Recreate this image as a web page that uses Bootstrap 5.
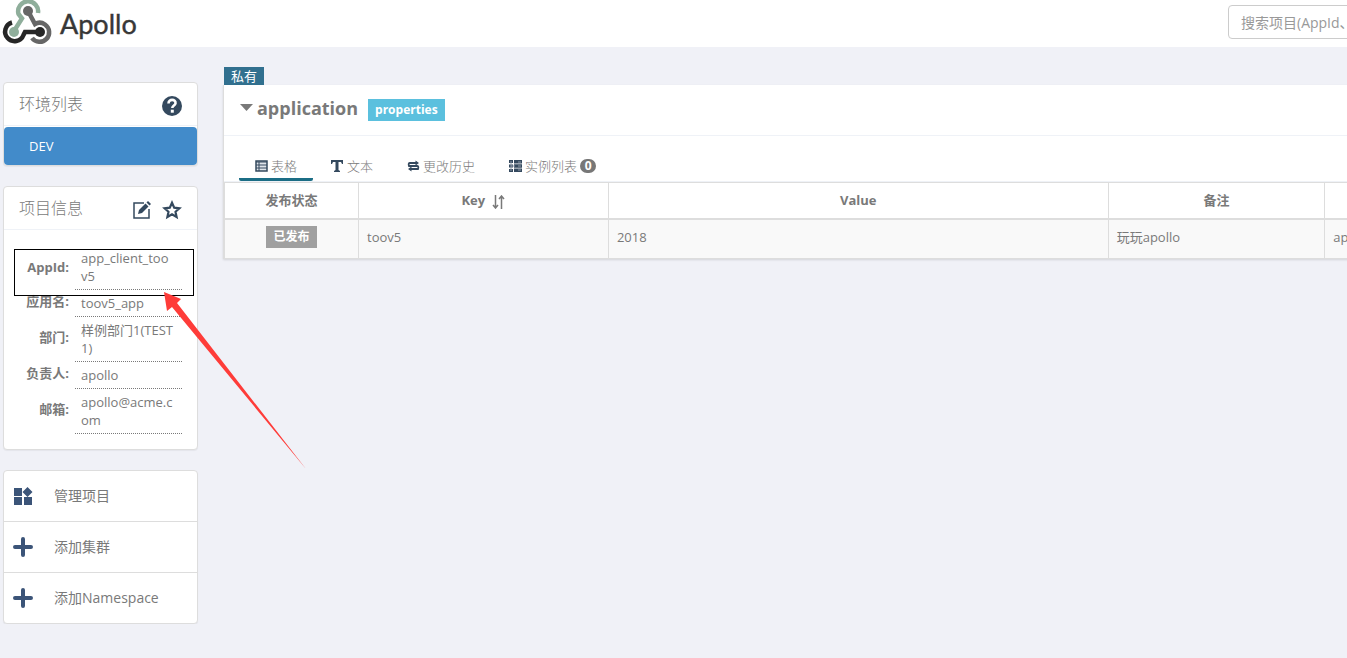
<!DOCTYPE html>
<html lang="zh-CN">
<head>
<meta charset="utf-8">
<meta name="viewport" content="width=device-width, initial-scale=1">
<title>Apollo</title>
<link href="https://cdn.jsdelivr.net/npm/bootstrap@5.3.0/dist/css/bootstrap.min.css" rel="stylesheet">
<style>
  body { font-family: "Open Sans", "Noto Sans CJK SC", sans-serif; font-size: 14px; line-height: 20px; color: #797979; background: #f0f1f7; overflow-x: hidden; }
  .topbar { height: 47px; padding-top: 5px; }
  .wide { min-width: 1668px; }
  .brand-name { font-family: Lato, sans-serif; font-size: 27px; line-height: 48px; color: #373737; -webkit-text-stroke: 0.4px #373737; }
  .search-box { width: 350px; height: 34px; font-size: 14px; color: #797979; border-color: #ccc; border-radius: 4px; }
  .search-box::placeholder { color: #999; }
  .search-wrap { margin-left: 1228px; }
  .side { width: 195px; margin-left: 3px; margin-top: 35px; gap: 20px; }
  .panel { background: #fff; border: 1px solid #ddd; border-radius: 4px; box-shadow: 0 1px 1px rgba(0,0,0,.05); }
  .panel-title { height: 43px; padding: 0 15px; gap: 10px; border-bottom: 1px solid #eff2f7; font-size: 16px; font-weight: 300; }
  .icon-btn { border: 0; padding: 4px 0 0; background: none; line-height: 0; }
  .env { height: 38px; margin-top: 1px; padding: 0 25px; background: #428bca; color: #fff; border-radius: 4px; font-size: 13px; line-height: 38px; }
  .info { padding: 19px 15px 15px 10px; font-size: 13px; line-height: 18px; }
  .info th { width: 61px; padding: 0 6px 4px 0; text-align: right; vertical-align: middle; font-weight: 700; }
  .info td { padding: 0 8px 4px 6px; border-bottom: 1px dotted #797979; word-break: break-all; }
  .info tr + tr td { padding-top: 4px; }
  .action { height: 51px; padding-left: 9px; gap: 20px; color: #797979; text-decoration: none; }
  .action:first-child { height: 50px; }
  .action + .action { border-top: 1px solid #ddd; }
  .mark-box { left: 10px; top: 62px; width: 180px; height: 47px; border: 1px solid #000; pointer-events: none; }
  .pointer-arrow { left: 159px; top: 105px; pointer-events: none; }
  .main-area { margin-left: 25px; margin-top: 20px; }
  .tag { width: 40px; height: 18px; margin-left: 1px; background: #31708f; color: #fff; font-size: 13px; line-height: 18px; }
  .ns { background: #fff; border-left: 1px solid #ddd; box-shadow: 0 1px 2px rgba(0,0,0,.12); }
  .ns-head { height: 51px; padding: 0 16px; border-bottom: 1px solid #eff2f7; }
  .ns-title { gap: 4px; padding-bottom: 5px; }
  .ns-name { font-size: 18px; line-height: 24px; font-weight: 700; }
  .type-label { height: 22px; margin-left: 10px; padding: 0 7px; background: #5bc0de; color: #fff; font-size: 12px; line-height: 22px; font-weight: 700; }
  .tabs { height: 46px; padding: 0 15px; gap: 2px; border-bottom: 1px solid #eff2f7; font-size: 13px; }
  .tab-link { height: 28px; padding: 0 16px; gap: 3px; color: #797979; text-decoration: none; font-weight: 300; border-bottom: 3px solid transparent; }
  .tab-link.active { border-bottom-color: #1b6d85; border-radius: 2px; }
  .count { width: 16px; height: 14px; line-height: 14px; border-radius: 7px; background: #777; color: #fff; font-size: 12px; font-weight: 700; text-align: center; }
  .grid-table { width: 1667px; table-layout: fixed; border-collapse: collapse; font-size: 13px; }
  .grid-table th, .grid-table td { border: 1px solid #ddd; padding: 0 8px; }
  .grid-table th { height: 36px; text-align: center; font-weight: 700; border-bottom: 2px solid #ddd; }
  .grid-table td { height: 40px; background: #f9f9f9; padding-bottom: 4px; }
  .col-state { width: 134px; }
  .col-key { width: 15%; }
  .col-value { width: 30%; }
  .col-note { width: 13%; }
  .state { height: 22px; padding: 0 7px; background: #a0a0a0; color: #fff; font-size: 12px; line-height: 22px; font-weight: 700; }
</style>
<script src="https://cdn.jsdelivr.net/npm/bootstrap@5.3.0/dist/js/bootstrap.bundle.min.js"></script>
</head>
<body>
<header class="topbar wide bg-white position-relative">
  <a href="#" class="position-absolute d-flex align-items-center text-decoration-none start-0 top-0">
    <svg width="56" height="48" viewBox="0 0 56 48" fill="none" stroke-width="4.500">
      <path d="M38 13A10 10 0 1 0 18.500 14L22 18.500L14 31" stroke="#8fae9b"/>
      <circle cx="14" cy="32" r="5" fill="#8fae9b"/>
      <path d="M12 22.500A9.500 9.500 0 1 0 23.500 35L25 32H39" stroke="#262626"/>
      <circle cx="40" cy="32" r="5" fill="#262626"/>
      <path d="M28 11L35 24Q40 21 45 24.500A9.500 9.500 0 1 1 32 38" stroke="#666"/>
      <circle cx="28" cy="11" r="5" fill="#666"/>
    </svg>
    <span class="brand-name ms-1">Apollo</span>
  </a>
  <div class="search-wrap"><input type="text" class="form-control search-box" aria-label="搜索项目" placeholder="搜索项目(AppId、项目名)"></div>
</header>

<div class="d-flex wide align-items-start">
  <aside class="side d-flex flex-column flex-shrink-0">
    <section class="panel">
      <div class="panel-title d-flex align-items-center justify-content-between">环境列表
        <button class="icon-btn" aria-label="帮助"><svg width="20" height="20" viewBox="0 0 20 20"><circle cx="10" cy="10" r="10" fill="#34495e"/><path d="M6.500 7.500C6.500 2.500 14 3 13.500 7.300C13.200 9.500 10.300 9.500 10.300 12" fill="none" stroke="#fff" stroke-width="2.600"/><path d="M8.800 13.700h3v3h-3z" fill="#fff"/></svg></button>
      </div>
      <div class="env">DEV</div>
    </section>

    <section class="panel position-relative">
      <div class="panel-title d-flex align-items-center">项目信息
        <button class="icon-btn ms-auto" aria-label="编辑"><svg width="20" height="20" viewBox="0 0 20 20" fill="none" stroke="#34495e"><path d="M12 3H2v15h15V9" stroke-width="1.500"/><path d="M6 14l1-4 6.500-6.500 3 3L10 13z" fill="#34495e" stroke="none"/><path d="M14.500 2.500L16 1l3 3-1.500 1.500z" fill="#34495e" stroke="none"/></svg></button>
        <button class="icon-btn" aria-label="收藏"><svg width="20" height="20" viewBox="0 0 20 20"><path d="M10 2.800l2.200 4.900 5.200.6-3.900 3.500 1.100 5.200-4.600-2.700L5.400 17l1.100-5.200-3.900-3.500 5.200-.6z" fill="none" stroke="#34495e" stroke-width="2.200"/></svg></button>
      </div>
      <div class="info">
        <table class="w-100">
          <tr><th>AppId:</th><td>app_client_toov5</td></tr>
          <tr><th>应用名:</th><td>toov5_app</td></tr>
          <tr><th>部门:</th><td>样例部门1(TEST1)</td></tr>
          <tr><th>负责人:</th><td>apollo</td></tr>
          <tr><th>邮箱:</th><td>apollo@acme.com</td></tr>
        </table>
      </div>
      <div class="mark-box position-absolute"></div>
      <svg class="pointer-arrow position-absolute" width="144" height="178" viewBox="0 0 144 178"><path d="M1 0L18 7L14 11L143 177L9 15L4 19Z" fill="#fe3c39"/></svg>
    </section>

    <nav class="panel">
      <a href="#" class="action d-flex align-items-center"><svg width="21" height="20" viewBox="0 0 21 20" fill="#3b5478"><path d="M1 2h8v8H1zM1 11h8v8H1zM11 11h8v8h-8zM14.500 1l5 5-5 5-5-5z"/></svg>管理项目</a>
      <a href="#" class="action d-flex align-items-center"><svg width="21" height="20" viewBox="0 0 21 20" fill="none" stroke="#3b5478" stroke-width="4" stroke-linecap="round"><path d="M10 2v16M2 10h16"/></svg>添加集群</a>
      <a href="#" class="action d-flex align-items-center"><svg width="21" height="20" viewBox="0 0 21 20" fill="none" stroke="#3b5478" stroke-width="4" stroke-linecap="round"><path d="M10 2v16M2 10h16"/></svg>添加Namespace</a>
    </nav>
  </aside>

  <main class="main-area">
    <div class="tag text-center">私有</div>
    <section class="ns">
      <div class="ns-head d-flex align-items-center">
        <div class="ns-title d-flex align-items-center">
          <svg width="13" height="7" viewBox="0 0 13 7"><path d="M0 0h13L6.500 7z" fill="#797979"/></svg>
          <span class="ns-name">application</span>
        </div>
        <span class="type-label">properties</span>
      </div>
      <nav class="tabs d-flex align-items-end">
        <a href="#" class="tab-link active d-flex align-items-center"><svg width="13" height="12" viewBox="0 0 13 12"><path d="M1 1h11v10H1z" fill="#dfe4ea" stroke="#34495e" stroke-width="1.500"/><path d="M1 2h11M1 5h11M1 8h11M4 2v9" fill="none" stroke="#34495e"/></svg>表格</a>
        <a href="#" class="tab-link d-flex align-items-center"><svg width="13" height="12" viewBox="0 0 13 12"><path d="M0 0h12v4h-1L10 2H7.500v8L9 11v1H3v-1l1.500-1V2H2L1 4H0z" fill="#34495e"/></svg>文本</a>
        <a href="#" class="tab-link d-flex align-items-center"><svg width="13" height="12" viewBox="0 0 13 12"><path d="M9 3H3q-2 0-1 3h8q2 0 1 3H4" fill="none" stroke="#34495e" stroke-width="1.800"/><path d="M8.500 0.500L12 3 8.500 5.500zM4.500 6.500L1 9l3.500 2.500z" fill="#34495e"/></svg>更改历史</a>
        <a href="#" class="tab-link d-flex align-items-center"><svg width="13" height="12" viewBox="0 0 13 12"><path d="M5 0h8v3.500H5zM5 4.200h8v3.500H5zM5 8.500h8V12H5zM0 0h4v3H0zM0 4.500h4v3H0zM0 9h4v3H0z" fill="#34495e"/><path d="M2 1v10M2 6h4M9 2h3M9 6h3M9 10h3" stroke="#8d9aa8"/></svg>实例列表<span class="count">0</span></a>
      </nav>
      <table class="grid-table">
        <colgroup><col class="col-state"><col class="col-key"><col class="col-value"><col class="col-note"><col></colgroup>
        <thead><tr><th>发布状态</th><th>Key <svg class="ms-1" width="13" height="14" viewBox="0 0 13 14" fill="none" stroke="#797979" stroke-width="1.500"><path d="M3.500 0v12M1 10l2.500 3L6 10M9.500 14V1M7 4l2.500-3L12 4"/></svg></th><th>Value</th><th>备注</th><th></th></tr></thead>
        <tbody><tr><td class="text-center"><span class="state d-inline-block">已发布</span></td><td>toov5</td><td>2018</td><td>玩玩apollo</td><td>apollo</td></tr></tbody>
      </table>
    </section>
  </main>
</div>
</body>
</html>
